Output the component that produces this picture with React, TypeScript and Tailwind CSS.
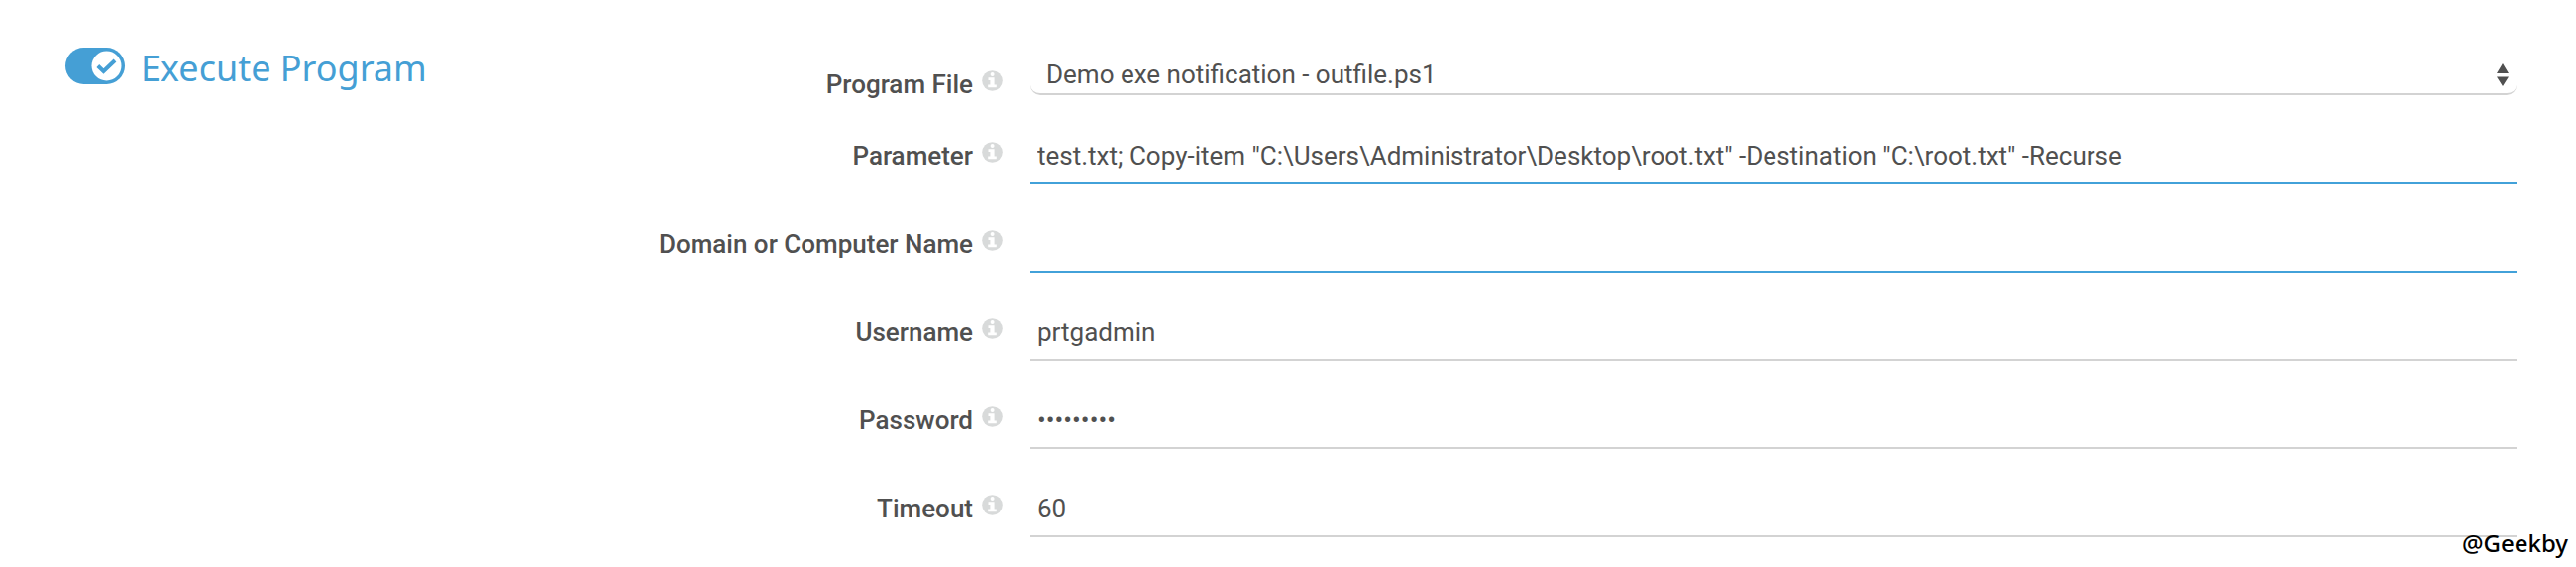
import React, { ComponentPropsWithoutRef, ReactNode, useState } from 'react';
import { clsx } from 'clsx';

const InfoIcon = () => {
  return (
    <svg
      viewBox="0 0 21 21"
      className="mt-[9px] size-[21px] shrink-0 fill-[#d8dada]"
      aria-hidden="true"
    >
      <circle cx="10.5" cy="10.5" r="10.3" />
      <circle cx="10.6" cy="4" r="2" fill="#fff" />
      <path d="M6.500 7.200h6.100v7.300h2.200v2.800H6.200v-2.800h2.200V10H6.500z" fill="#fff" />
    </svg>
  );
};

interface FieldRowProps {
  id: string;
  label: string;
  compact?: boolean;
  children: ReactNode;
}

const FieldRow = ({ id, label, compact, children }: FieldRowProps) => {
  return (
    <div
      className={clsx(
        'grid grid-cols-[580fr_1500fr] items-start gap-7 last:h-[52px]',
        compact ? 'h-[78px]' : 'h-[89px]',
      )}
    >
      <div className={clsx('flex items-start justify-end gap-[9px]', compact && 'pt-1.5')}>
        <label htmlFor={id} className="font-medium leading-[46px] whitespace-nowrap">
          {label}
        </label>
        <InfoIcon />
      </div>
      {children}
    </div>
  );
};

interface TextFieldProps extends ComponentPropsWithoutRef<'input'> {
  id: string;
  label: string;
  highlighted?: boolean;
}

const TextField = ({ id, label, highlighted, ...restProps }: TextFieldProps) => {
  return (
    <FieldRow id={id} label={label}>
      <input
        id={id}
        className={clsx(
          'h-[52px] w-full border-b-2 bg-transparent px-[7px] pb-1 outline-none',
          highlighted ? 'border-[#42a1d9]' : 'border-[#d3d3d3]',
        )}
        {...restProps}
      />
    </FieldRow>
  );
};

const SelectField = ({ id, label, options }: { id: string; label: string; options: string[] }) => {
  return (
    <FieldRow id={id} label={label} compact>
      <div className="relative">
        <select
          id={id}
          className="block h-10 w-full appearance-none rounded-[10px] border-b-2 border-[#d3d3d3] bg-transparent px-4 outline-none"
        >
          {options.map((option) => (
            <option key={option}>{option}</option>
          ))}
        </select>
        <svg
          viewBox="0 0 12 23"
          className="pointer-events-none absolute top-2 right-2 h-[23px] w-3 fill-[#505050]"
          aria-hidden="true"
        >
          <path d="M6 0l6 10H0zM6 23L0 13.500h12z" />
        </svg>
      </div>
    </FieldRow>
  );
};

const SectionToggle = ({ label }: { label: string }) => {
  const [enabled, setEnabled] = useState(true);

  return (
    <div className="flex items-start gap-4">
      <div className="relative h-[37px] w-[60px] shrink-0">
        <input
          id="section-toggle"
          type="checkbox"
          checked={enabled}
          onChange={(event) => setEnabled(event.target.checked)}
          className="block size-full appearance-none rounded-full bg-[#bfc4c7] checked:bg-[#459fd5]"
        />
        <svg
          viewBox="0 0 60 37"
          className="pointer-events-none absolute inset-0 size-full"
          aria-hidden="true"
        >
          <circle cx={enabled ? 41.5 : 18.5} cy="18.500" r="15" fill="#fff" />
          {enabled && (
            <path d="M32.800 18.500l5.700 5.500L50 13" fill="none" stroke="#459fd5" strokeWidth="4" />
          )}
        </svg>
      </div>
      <label
        htmlFor="section-toggle"
        className="font-['Noto_Sans',sans-serif] text-[36px] leading-[42px] whitespace-nowrap text-[#459fd5]"
      >
        {label}
      </label>
    </div>
  );
};

export default function App() {
  return (
    <main className="relative bg-white pt-12 pr-[60px] pb-7 pl-[66px] font-[Roboto,sans-serif] text-[26px] text-[#505050]">
      <form className="grid grid-cols-[366fr_2108fr]">
        <SectionToggle label="Execute Program" />
        <div className="pt-2">
          <SelectField
            id="program-file"
            label="Program File"
            options={['Demo exe notification - outfile.ps1']}
          />
          <TextField
            id="parameter"
            label="Parameter"
            defaultValue={
              'test.txt; Copy-item "C:\\Users\\Administrator\\Desktop\\root.txt" -Destination "C:\\root.txt" -Recurse'
            }
            highlighted
          />
          <TextField id="domain" label="Domain or Computer Name" highlighted />
          <TextField id="username" label="Username" defaultValue="prtgadmin" />
          <TextField id="password" label="Password" type="password" defaultValue="123456789" />
          <TextField id="timeout" label="Timeout" defaultValue="60" />
        </div>
      </form>
      <span className="absolute right-2 bottom-1.5 font-['Noto_Sans',sans-serif] text-2xl font-medium text-black">
        @Geekby
      </span>
    </main>
  );
}
